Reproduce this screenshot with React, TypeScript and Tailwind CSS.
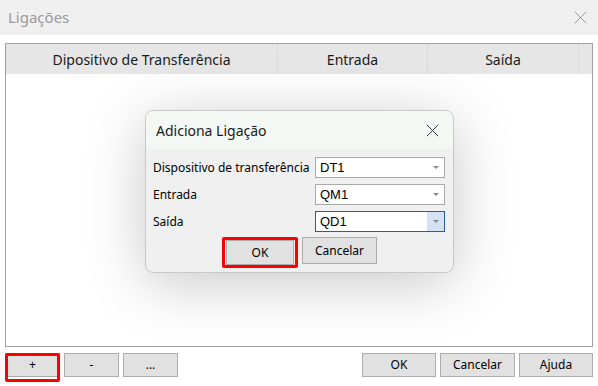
const font = "font-['Noto_Sans','Open_Sans',sans-serif]";

const Btn = ({ label, className = "" }: { label: string; className?: string }) => (
  <div
    className={`flex items-center justify-center h-[24px] bg-[#e1e1e1] border border-[#adadad] text-[12px] text-black ${className}`}
  >
    {label}
  </div>
);

const Combo = ({ value, focused = false }: { value: string; focused?: boolean }) => (
  <div
    className={`flex h-[21px] w-[130px] items-stretch bg-white border ${
      focused ? "border-[#2c5d9b]" : "border-[#a9a9a9]"
    }`}
  >
    <div className="flex-1 flex items-center pl-[4px] text-[13px] font-['Liberation_Sans',sans-serif] text-black">
      {value}
    </div>
    <div className={`w-[17px] flex items-center justify-center ${focused ? "bg-[#d3e3f4]" : ""}`}>
      <div className="w-0 h-0 border-l-[3px] border-r-[3px] border-t-[3px] border-l-transparent border-r-transparent border-t-[#8a8a8a]" />
    </div>
  </div>
);

const CloseX = ({ size, color }: { size: number; color: string }) => (
  <svg width={size} height={size} viewBox="0 0 16 16" fill="none" stroke={color} strokeWidth="1.1">
    <path d="M1 1 L15 15 M15 1 L1 15" />
  </svg>
);

export default function App() {
  return (
    <div className={`relative w-[598px] h-[386px] bg-white overflow-hidden ${font}`}>
      {/* title bar */}
      <div className="h-[35px] bg-[#f0f0f0] flex items-center justify-between pl-[8px] pr-[11px]">
        <span className="text-[15px] text-[#9a9a9a]">Ligações</span>
        <CloseX size={13} color="#8c8c8c" />
      </div>

      {/* list */}
      <div className="px-[5px] pt-[8px]">
        <div className="h-[304px] border border-[#a0a0a0] flex flex-col">
          <div className="flex h-[30px] bg-[#e6e6e6] text-[14px] text-[#1a1a1a]">
            <div className="w-[272px] flex items-center justify-center border-r border-[#d9d9d9]">
              Dipositivo de Transferência
            </div>
            <div className="w-[150px] flex items-center justify-center border-r border-[#d9d9d9]">
              Entrada
            </div>
            <div className="w-[151px] flex items-center justify-center border-r border-[#d9d9d9]">
              Saída
            </div>
            <div className="flex-1" />
          </div>
          <div className="flex-1 bg-white" />
        </div>

        {/* bottom buttons */}
        <div className="flex justify-between mt-[6px]">
          <div className="flex gap-[4px]">
            <div className="relative">
              <Btn label="+" className="w-[55px]" />
              <div className="absolute left-0 top-0 w-[55px] h-[29px] border-[3px] border-[#ff0000] rounded-[2px]" />
            </div>
            <Btn label="-" className="w-[55px]" />
            <Btn label="..." className="w-[55px]" />
          </div>
          <div className="flex gap-[4px]">
            <Btn label="OK" className="w-[74px]" />
            <Btn label="Cancelar" className="w-[75px]" />
            <Btn label="Ajuda" className="w-[74px]" />
          </div>
        </div>
      </div>

      {/* dialog */}
      <div className="absolute left-[145px] top-[110px] w-[309px] h-[163px] rounded-[8px] border border-[#c8c8c8] bg-[#f0f0f0] overflow-hidden shadow-[0_10px_60px_rgba(0,0,0,0.22)] flex flex-col">
        <div className="h-[38px] shrink-0 bg-[#f4f8f4] flex items-center justify-between pl-[10px] pr-[14px]">
          <span className="text-[14px] text-[#1a1a1a]">Adiciona Ligação</span>
          <CloseX size={13} color="#222" />
        </div>
        <div className="flex flex-col gap-[6px] pl-[7px] pr-[8px] pt-[8px] text-[12px] text-black">
          <div className="flex items-center justify-between">
            <span className="whitespace-nowrap">Dispositivo de transferência</span>
            <Combo value="DT1" />
          </div>
          <div className="flex items-center justify-between">
            <span>Entrada</span>
            <Combo value="QM1" />
          </div>
          <div className="flex items-center justify-between">
            <span>Saída</span>
            <Combo value="QD1" focused />
          </div>
        </div>
        <div className="flex justify-center items-start gap-[4px] mt-[5px]">
          <div className="w-[76px] h-[31px] border-[3px] border-[#ff0000] rounded-[2px] flex items-center justify-center">
            <Btn label="OK" className="w-[68px] h-[25px] border-[#8f8f8f]" />
          </div>
          <Btn label="Cancelar" className="w-[75px] h-[27px]" />
        </div>
      </div>
    </div>
  );
}
